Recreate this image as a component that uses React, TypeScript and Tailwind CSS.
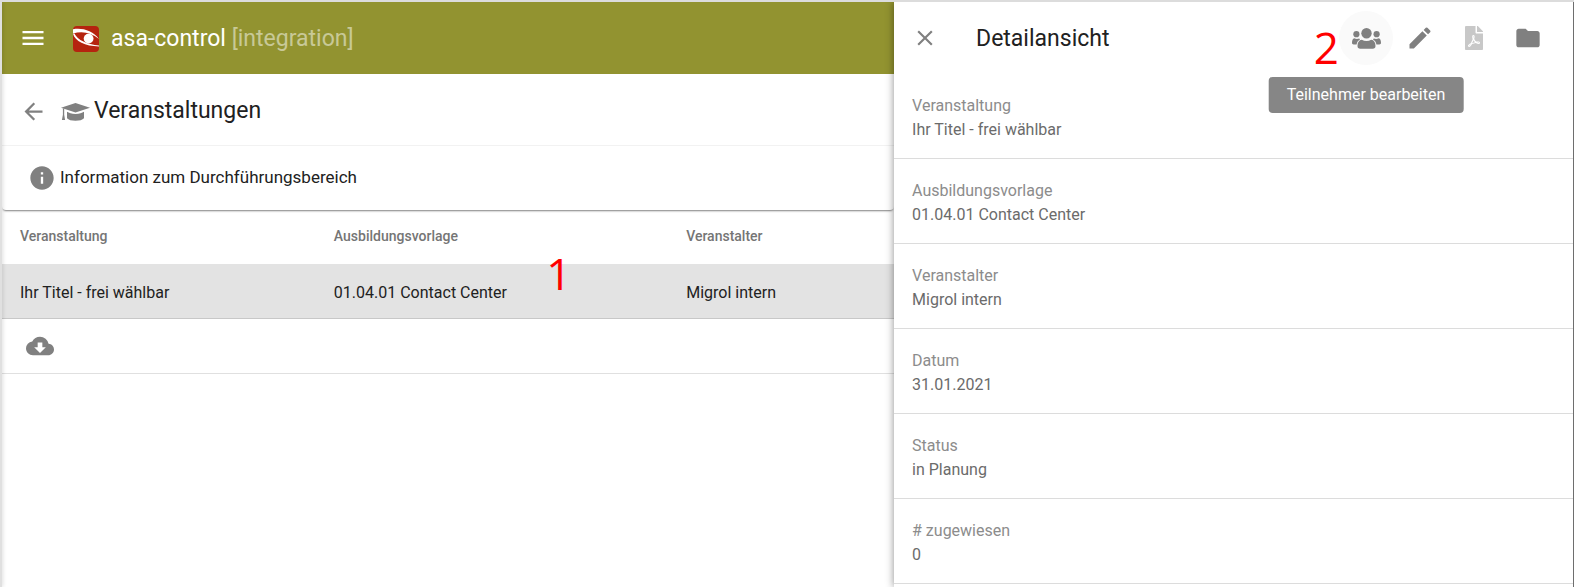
import { MdArrowBack, MdClose, MdCloudDownload, MdEdit, MdFolder, MdInfo, MdMenu } from "react-icons/md";
import { FaFilePdf } from "react-icons/fa";

const details = [
  { label: "Veranstaltung", value: "Ihr Titel - frei wählbar" },
  { label: "Ausbildungsvorlage", value: "01.04.01 Contact Center" },
  { label: "Veranstalter", value: "Migrol intern" },
  { label: "Datum", value: "31.01.2021" },
  { label: "Status", value: "in Planung" },
  { label: "# zugewiesen", value: "0" },
];

const Logo = () => {
  return (
    <svg viewBox="0 0 26 26" className="size-[26px]" aria-hidden="true">
      <rect width="26" height="26" rx="4" fill="#b5240f" />
      <path d="M0 3.200C9 1.500 20 4.500 26 13C18 6.200 9 4.800 0 7.400z" fill="#fff" />
      <path d="M0 7.800c2 7.500 12 12.500 26 12.600v-1C14 18.800 4.500 14 1.400 7.600z" fill="#fff" />
      <circle cx="15.600" cy="12.600" r="4.900" fill="#fff" />
    </svg>
  );
};

const CapIcon = () => {
  return (
    <svg viewBox="0 0 29 18" className="h-[18px] w-[29px]" fill="currentColor" aria-hidden="true">
      <path d="M14.500 0L29 4.700L14.500 9.600L0 4.700z" />
      <path d="M6 8.800c2 1.200 4.500 2.300 8.500 2.300s6.500-1.100 8.500-2.300v6.500c-1.500 1.700-4.500 2.500-8.500 2.500S7.500 17 6 15.300z" />
      <path d="M1.900 5.300l1.300.4v6l.9 5.300H.900l1-5.300z" />
    </svg>
  );
};

const UsersIcon = () => {
  return (
    <svg viewBox="0 0 29 21" className="h-[21px] w-[29px]" fill="currentColor" aria-hidden="true">
      <circle cx="14.500" cy="5.300" r="5.200" />
      <circle cx="4.400" cy="6.200" r="3.100" />
      <circle cx="24.600" cy="6.200" r="3.100" />
      <path d="M9.800 11.800c1.400.8 3 1.200 4.700 1.200s3.300-.4 4.700-1.200c2.800.3 4.300 2.800 4.300 6.200 0 1.800-1 2.700-2.700 2.700H8.200c-1.700 0-2.700-.9-2.700-2.700 0-3.400 1.500-5.900 4.300-6.200z" />
      <path d="M2.300 10.200c1.700.9 3.300.8 4.900.3l.8.900c-2 1-3.100 2.800-3.400 5H1.700C.6 16.400 0 15.800 0 14.700c0-2.300.7-4 2.300-4.500z" />
      <path d="M26.700 10.200c-1.700.9-3.300.8-4.900.3l-.8.900c2 1 3.100 2.800 3.400 5h2.900c1.100 0 1.700-.6 1.700-1.700 0-2.300-.7-4-2.300-4.500z" />
    </svg>
  );
};

const Main = () => {
  return (
    <main className="min-w-0 flex-1">
      <header className="flex h-18 items-center bg-[#929330] pl-[13px] text-[23px] text-white">
        <button type="button" aria-label="Menu" className="p-1">
          <MdMenu size={28} />
        </button>
        <span className="ml-[22px] flex items-center gap-3 pt-0.5">
          <Logo />
          <h1>
            asa-control <span className="text-white/50">[integration]</span>
          </h1>
        </span>
      </header>
      <div className="flex h-18 items-center border-b border-[#f2f2f2] pt-1 pl-[18px] text-[23px]">
        <button type="button" aria-label="Zurück" className="text-[#808080]">
          <MdArrowBack size={27} />
        </button>
        <span className="ml-[14px] text-[#808080]">
          <CapIcon />
        </span>
        <h2 className="ml-1">Veranstaltungen</h2>
      </div>
      <div className="flex h-16 items-center gap-1 rounded-b pl-[26px] shadow-[0_2px_2px_-1px_#00000080]">
        <MdInfo size={28} className="text-[#808080]" />
        <p className="text-[17px]">Information zum Durchführungsbereich</p>
      </div>
      <table className="w-full table-fixed border-collapse text-left">
        <colgroup>
          <col className="w-[37.2%]" />
          <col className="w-[39.5%]" />
          <col />
        </colgroup>
        <thead>
          <tr className="h-[54px] text-sm text-[#757575]">
            <th className="pb-0.5 pl-[18px] font-medium">Veranstaltung</th>
            <th className="pb-0.5 font-medium">Ausbildungsvorlage</th>
            <th className="pb-0.5 font-medium">Veranstalter</th>
          </tr>
        </thead>
        <tbody>
          <tr className="h-[54px] border-b border-[#c8c8c8] bg-[#e3e3e3]">
            <td className="pt-1 pl-[18px]">Ihr Titel - frei wählbar</td>
            <td className="pt-1">01.04.01 Contact Center</td>
            <td className="pt-1">Migrol intern</td>
          </tr>
        </tbody>
      </table>
      <div className="flex h-[55px] items-center border-b border-[#e0e0e0] pl-6">
        <button type="button" aria-label="Herunterladen" className="text-[#808080]">
          <MdCloudDownload size={28} />
        </button>
      </div>
    </main>
  );
};

const Detail = () => {
  return (
    <aside className="relative w-[43.2%] shrink-0 border-r border-[#6e6e6e] bg-white shadow-[0_0_8px_#00000073]">
      <div className="flex h-18 items-center px-[18px] text-[#808080]">
        <button type="button" aria-label="Schliessen">
          <MdClose size={26} />
        </button>
        <h2 className="ml-[38px] flex-1 pt-0.5 text-[23px] text-[#212121]">Detailansicht</h2>
        <div className="flex">
          <div className="relative">
            <button
              type="button"
              aria-label="Teilnehmer"
              aria-describedby="tip"
              className="flex size-[54px] items-center justify-center rounded-full bg-[#fafafa]"
            >
              <UsersIcon />
            </button>
            <span className="absolute top-3.5 right-full font-['Open_Sans',sans-serif] text-[44px] leading-none text-[#ff0000]">2</span>
            <div
              id="tip"
              role="tooltip"
              className="absolute top-full left-1/2 mt-3 -translate-x-1/2 rounded bg-[#868686] px-[18px] py-1.5 whitespace-nowrap text-white"
            >
              Teilnehmer bearbeiten
            </div>
          </div>
          <button type="button" aria-label="Bearbeiten" className="flex size-[54px] items-center justify-center">
            <MdEdit size={28} />
          </button>
          <button type="button" disabled aria-label="PDF" className="flex size-[54px] items-center justify-center text-[#c8c8c8]">
            <FaFilePdf size={24} />
          </button>
          <button type="button" aria-label="Ordner" className="flex size-[54px] items-center justify-center">
            <MdFolder size={28} />
          </button>
        </div>
      </div>
      <dl>
        {details.map((item) => (
          <div key={item.label} className="flex h-[85px] flex-col justify-center border-b border-[#dcdcdc] px-[18px] pt-1">
            <dt className="text-[#8c8c8c]">{item.label}</dt>
            <dd className="text-[#6b6b6b]">{item.value}</dd>
          </div>
        ))}
      </dl>
    </aside>
  );
};

const App = () => {
  return (
    <div className="relative flex min-h-screen overflow-hidden border-t-2 border-[#dcdcdc] bg-white font-['Roboto',sans-serif] text-base text-[#212121]">
      <div className="relative w-[2px] bg-[#e0e0e0] shadow-[0_0_4px_#00000040]" />
      <Main />
      <Detail />
      <span className="absolute top-[249px] left-[34.7%] font-['Open_Sans',sans-serif] text-[44px] leading-none text-[#ff0000]">1</span>
    </div>
  );
};
export default App;
